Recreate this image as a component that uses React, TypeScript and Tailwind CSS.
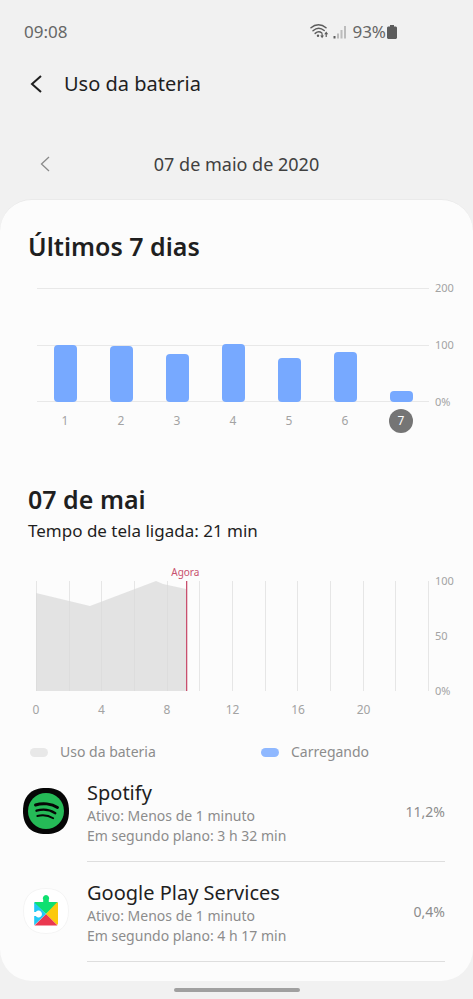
const days = [
  { day: 1, usage: 100 },
  { day: 2, usage: 98 },
  { day: 3, usage: 85 },
  { day: 4, usage: 101 },
  { day: 5, usage: 77 },
  { day: 6, usage: 88 },
  { day: 7, usage: 20 },
];

const hours = [0, 4, 8, 12, 16, 20];

const apps = [
  {
    name: "Spotify",
    active: "Ativo: Menos de 1 minuto",
    background: "Em segundo plano: 3 h 32 min",
    percent: "11,2%",
    Icon: SpotifyIcon,
  },
  {
    name: "Google Play Services",
    active: "Ativo: Menos de 1 minuto",
    background: "Em segundo plano: 4 h 17 min",
    percent: "0,4%",
    Icon: PlayServicesIcon,
  },
];

function SpotifyIcon() {
  return (
    <svg viewBox="0 0 46 46" className="size-[46px] shrink-0" aria-hidden="true">
      <path
        d="M23 0C38 0 46 8 46 23S38 46 23 46 0 38 0 23 8 0 23 0Z"
        fill="#060606"
      />
      <circle cx="23" cy="23" r="18" fill="#25ba57" />
      <g fill="none" stroke="#060606" strokeLinecap="round">
        <path d="M12.500 17C19.500 14.800 28.500 15.500 34.500 19.500" strokeWidth="2.900" />
        <path d="M13.500 22.700C19.500 21 27 21.800 32.300 25.200" strokeWidth="2.300" />
        <path d="M14.300 28C19.300 26.700 25.600 27.400 30.200 30.300" strokeWidth="1.900" />
      </g>
    </svg>
  );
}

function PlayServicesIcon() {
  return (
    <svg viewBox="0 0 46 46" className="size-[46px] shrink-0" aria-hidden="true">
      <path
        d="M23 .5C37.500 .5 45.500 8.500 45.500 23S37.500 45.500 23 45.500 .5 37.500 .5 23 8.500 .5 23 .5Z"
        fill="#fff"
        stroke="#f4f4f4"
      />
      <path
        d="M12 14H20.200V11.800A3.200 3.200 0 1 1 25.800 11.800V14H34L35 15 23 26 11 15Z"
        fill="#0fe070"
      />
      <path d="M34 14.300L35 15V36L34 37 23 26Z" fill="#fcc90c" />
      <path d="M23 26L34.500 37.500H11.500Z" fill="#ea3850" />
      <path d="M11.200 14.300L23 26 11.200 37.300Z" fill="#22c9f5" />
      <path
        d="M10.800 24H12.800A3.400 3.400 0 1 1 12.800 28H10.800Z"
        fill="#fff"
      />
    </svg>
  );
}

function StatusIcons() {
  return (
    <svg
      viewBox="0 0 38 18"
      className="h-[18px] w-[38px]"
      fill="none"
      aria-hidden="true"
    >
      <g stroke="#5c5c5c" strokeWidth="1.500" strokeLinecap="round">
        <path d="M1 4.800C5.500 .8 11.500 .8 16 4.800" />
        <path d="M3 7.700C6.500 4.600 10.800 4.600 14.200 7.500" />
        <path d="M5.200 10.400C7.500 8.400 9.800 8.400 11.800 10" />
      </g>
      <circle cx="8" cy="12.800" r="1.200" fill="#5c5c5c" />
      <path d="M10.200 12.500H14L12.100 15.200ZM14.200 11.200H18.200L16.200 8.500Z" fill="#5c5c5c" />
      <path d="M12.100 10.500V13M16.200 11V14" stroke="#5c5c5c" strokeWidth="1.200" />
      <path d="M23.500 13H25.500V15.500H23.500Z" fill="#5c5c5c" />
      <path
        d="M27 10.500H29V15.500H27ZM30.500 7H32.500V15.500H30.500ZM34 3H36V15.500H34Z"
        fill="#bcbcbc"
      />
    </svg>
  );
}

function StatusBar() {
  return (
    <div className="flex h-16 items-center justify-between pl-6 pr-[76px] text-[17px] text-[#666]">
      <span>09:08</span>
      <div className="flex items-center">
        <StatusIcons />
        <span className="ml-1">93%</span>
        <svg
          viewBox="0 0 10 14"
          className="ml-px h-[14px] w-[10px]"
          aria-hidden="true"
        >
          <path
            d="M3 0H7V1.500H9L10 2.500V13L9 14H1L0 13V2.500L1 1.500H3Z"
            fill="#5c5c5c"
          />
        </svg>
      </div>
    </div>
  );
}

function WeekChart() {
  return (
    <div className="ml-[9px] mt-6 flex">
      <div className="flex-1">
        <div className="relative h-[114px]">
          {/* Grid lines */}
          <div className="absolute inset-0 flex flex-col justify-between">
            <div className="h-px bg-[#e8e8e8]" />
            <div className="h-px bg-[#e8e8e8]" />
            <div className="h-px bg-[#e8e8e8]" />
          </div>
          <div className="relative grid h-full grid-cols-7 items-end justify-items-center">
            {days.map(({ day, usage }) => (
              <div
                key={day}
                className="w-[23px] rounded bg-[#77a9ff]"
                style={{ height: `${usage / 2}%` }}
              />
            ))}
          </div>
        </div>
        <div className="mt-[7px] grid grid-cols-7 justify-items-center">
          {days.map(({ day }) => (
            <button
              key={day}
              type="button"
              className={
                day === 7
                  ? "size-6 rounded-full bg-[#757575] text-xs text-white"
                  : "size-6 rounded-full text-xs text-[#a3a3a3]"
              }
            >
              {day}
            </button>
          ))}
        </div>
      </div>
      <div className="-my-2 ml-[6px] flex h-[130px] w-[10px] flex-col justify-between text-[11px] leading-4 text-[#a3a3a3]">
        <span>200</span>
        <span>100</span>
        <span>0%</span>
      </div>
    </div>
  );
}

function DayChart() {
  return (
    <div className="ml-2 mt-9 flex">
      <div className="flex-1">
        <div className="relative h-[110px]">
          <div className="absolute inset-0 flex justify-between">
            {Array.from({ length: 13 }, (_, i) => (
              <div key={i} className="w-px bg-[#e6e6e6]" />
            ))}
          </div>
          <svg
            viewBox="0 0 393 110"
            preserveAspectRatio="none"
            className="absolute inset-0 size-full"
            aria-hidden="true"
          >
            <path
              d="M0 12L54 25 120 0 127 3 150 8V110H0Z"
              fill="#d8d8d8"
              fillOpacity="0.700"
            />
            {/* Current time marker */}
            <path d="M150 0H151.300V110H150Z" fill="#c8506e" />
          </svg>
          <span className="absolute bottom-full left-[38%] -translate-x-1/2 text-[10px] leading-[18px] text-[#c8506e]">
            Agora
          </span>
        </div>
        <div className="mt-[11px] grid grid-cols-6 text-xs leading-4 text-[#a3a3a3]">
          {hours.map((hour) => (
            <div key={hour}>
              <span className="inline-block -translate-x-1/2">{hour}</span>
            </div>
          ))}
        </div>
      </div>
      <div className="-my-2 ml-[6px] flex h-[126px] w-[10px] flex-col justify-between text-[11px] leading-4 text-[#a3a3a3]">
        <span>100</span>
        <span>50</span>
        <span>0%</span>
      </div>
    </div>
  );
}

export default function App() {
  return (
    <div className="min-h-screen bg-[#f1f1f1] font-['Noto_Sans',sans-serif] text-[#1f1f1f]">
      <StatusBar />

      {/* Header */}
      <header className="flex h-10 items-center pl-6">
        <button type="button" aria-label="Voltar">
          <svg viewBox="0 0 24 24" className="size-6" fill="none">
            <path d="M17 4L8 12 17 20" stroke="#1f1f1f" strokeWidth="2" />
          </svg>
        </button>
        <h1 className="ml-4 text-xl">Uso da bateria</h1>
      </header>

      {/* Date picker */}
      <div className="mt-10 grid h-10 grid-cols-[1fr_auto_1fr] items-center px-8">
        <button type="button" aria-label="Dia anterior" className="w-6">
          <svg viewBox="0 0 24 24" className="size-6" fill="none">
            <path d="M17 5L9.500 12 17 19" stroke="#8a8a8a" strokeWidth="1.300" />
          </svg>
        </button>
        <p className="text-lg text-[#404040]">07 de maio de 2020</p>
      </div>

      <main className="mt-[15px] rounded-[32px] border-t border-[#eaeaea] bg-[#fcfcfc] px-7 pb-[19px] pt-7">
        <section>
          <h2 className="text-[25px] font-semibold leading-9">Últimos 7 dias</h2>
          <WeekChart />
        </section>

        <section className="mt-12">
          <h2 className="text-[25px] font-semibold leading-9">07 de mai</h2>
          <p className="text-[17px] leading-7">Tempo de tela ligada: 21 min</p>
          <DayChart />
          <div className="mt-6 grid grid-cols-[231px_1fr] text-sm leading-5 text-[#8c8c8c]">
            <div className="flex items-center gap-3 pl-[2px]">
              <span className="h-[9px] w-[18px] rounded-full bg-[#e8e8e8]" />
              Uso da bateria
            </div>
            <div className="flex items-center gap-3 pl-[2px]">
              <span className="h-[9px] w-[18px] rounded-full bg-[#8fb8ff]" />
              Carregando
            </div>
          </div>
        </section>

        {/* Apps */}
        <ul className="-ml-[5px] mt-[18px] flex flex-col gap-[18px]">
          {apps.map(({ name, active, background, percent, Icon }) => (
            <li key={name} className="flex gap-[18px]">
              <div className="pt-2">
                <Icon />
              </div>
              <div className="flex h-[82px] flex-1 justify-between border-b border-[#dedede]">
                <div className="text-sm leading-5 text-[#8c8c8c]">
                  <h3 className="text-xl leading-[26px] text-[#1f1f1f]">{name}</h3>
                  <p>{active}</p>
                  <p>{background}</p>
                </div>
                <span className="pt-[22px] text-sm text-[#8c8c8c]">{percent}</span>
              </div>
            </li>
          ))}
        </ul>
      </main>

      <div className="mx-auto mt-[7px] h-1 w-[126px] rounded-full bg-[#a0a0a0]" />
    </div>
  );
}
